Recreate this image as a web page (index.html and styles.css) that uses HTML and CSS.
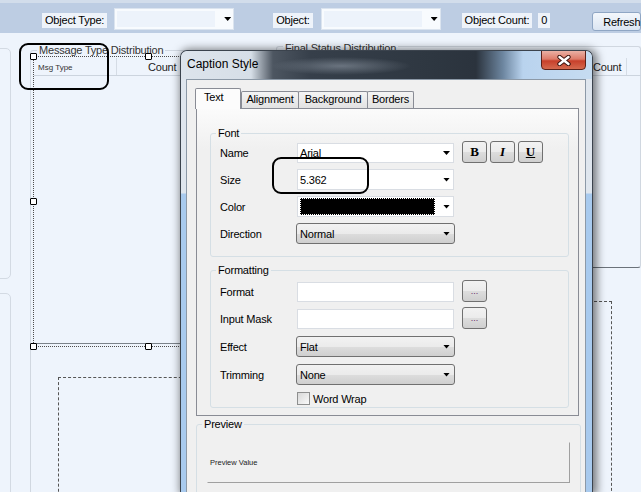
FILE: index.html
```html
<!DOCTYPE html>
<html>
<head>
<meta charset="utf-8">
<title>Caption Style</title>
<link rel="stylesheet" href="styles.css">
</head>
<body>
<div class="toolbar">
  <span class="tb-label">Object Type:</span>
  <div class="tb-combo gap7"><span class="tb-field"></span><span class="arrow"></span></div>
  <span class="tb-label gap39">Object:</span>
  <div class="tb-combo gap8"><span class="tb-field"></span><span class="arrow"></span></div>
  <span class="tb-label gap21">Object Count:</span>
  <span class="tb-label gap6">0</span>
  <button class="tb-refresh">Refresh</button>
</div>

<div class="canvas">
  <div class="side side-1"></div>
  <div class="side side-2"></div>
  <div class="rgroup rgroup-mt"><span class="rtitle">Message Type Distribution</span></div>
  <div class="rgroup rgroup-fs"><span class="rtitle rtitle-fs">Final Status Distribution</span></div>
  <div class="sel"></div>
  <div class="col-sep col-sep-l"></div>
  <div class="col-sep col-sep-r"></div>
  <div class="hdr-line hdr-line-l"></div>
  <div class="hdr-line hdr-line-r"></div>
  <div class="msg-type">Msg Type</div>
  <div class="count count-l">Count</div>
  <div class="count count-r">Count</div>
  <div class="rule"></div>
  <div class="dash dash-1"></div>
  <div class="dash dash-2"></div>
  <div class="handle h1"></div>
  <div class="handle h2"></div>
  <div class="handle h3"></div>
  <div class="handle h4"></div>
  <div class="handle h5"></div>
</div>

<div class="win">
  <div class="titlebar">
    <span class="title">Caption Style</span>
    <div class="close">
      <svg width="14" height="11" viewBox="0 0 14 11"><path d="M2.5 2 L11.5 9 M11.5 2 L2.5 9" stroke="#3c1510" stroke-width="4.4" stroke-linecap="round"/><path d="M2.5 2 L11.5 9 M11.5 2 L2.5 9" stroke="#ffffff" stroke-width="2.4" stroke-linecap="round"/></svg>
    </div>
  </div>
  <div class="client">
    <div class="tabs">
      <span class="tab on t1">Text</span>
      <span class="tab t2">Alignment</span>
      <span class="tab t3">Background</span>
      <span class="tab t4">Borders</span>
    </div>
    <div class="page">
      <fieldset class="group g-font">
        <legend>Font</legend>
        <div class="rows rows-font">
          <span class="lbl">Name</span>
          <div class="edit"><span>Arial</span><span class="arrow"></span></div>
          <div class="bgrp">
            <span class="btn fmt-b">B</span>
            <span class="btn fmt-i">I</span>
            <span class="btn fmt-u">U</span>
          </div>
          <span class="lbl">Size</span>
          <div class="edit"><span>5.362</span><span class="arrow"></span></div>
          <span></span>
          <span class="lbl">Color</span>
          <div class="edit"><span class="swatch"></span><span class="arrow"></span></div>
          <span></span>
          <span class="lbl">Direction</span>
          <div class="ddl"><span>Normal</span><span class="arrow"></span></div>
          <span></span>
        </div>
      </fieldset>
      <fieldset class="group g-fmt">
        <legend>Formatting</legend>
        <div class="rows rows-fmt">
          <span class="lbl">Format</span>
          <div class="edit"></div>
          <div class="bgrp"><span class="btn dots">...</span></div>
          <span class="lbl">Input Mask</span>
          <div class="edit"></div>
          <div class="bgrp"><span class="btn dots">...</span></div>
          <span class="lbl">Effect</span>
          <div class="ddl"><span>Flat</span><span class="arrow"></span></div>
          <span></span>
          <span class="lbl">Trimming</span>
          <div class="ddl"><span>None</span><span class="arrow"></span></div>
          <span></span>
          <span></span>
          <label class="chk-row"><span class="chk"></span><span>Word Wrap</span></label>
          <span></span>
        </div>
      </fieldset>
    </div>
    <fieldset class="group g-prev">
      <legend>Preview</legend>
      <div class="pv">Preview Value</div>
    </fieldset>
  </div>
</div>

<div class="mark mark-1"></div>
<div class="mark mark-2"></div>
</body>
</html>
```

FILE: styles.css
```css
* { box-sizing: border-box; }
html, body { margin: 0; padding: 0; }
body {
  width: 641px;
  height: 492px;
  overflow: hidden;
  position: relative;
  background: #eef4fc;
  font-family: "Liberation Sans", Arial, sans-serif;
  font-size: 11px;
  letter-spacing: -0.2px;
  color: #000;
}

/* ---------- top toolbar ---------- */
.toolbar {
  height: 33px;
  border-top: 3px solid #d2ddeb;
  background: #bdcde3;
  display: flex;
  align-items: flex-start;
  padding-left: 42px;
}
.tb-label {
  margin-top: 10px;
  height: 15px;
  line-height: 15px;
  padding: 0 3px;
  background: #eef3fa;
  white-space: nowrap;
}
.tb-combo {
  margin-top: 5px;
  width: 120px;
  height: 22px;
  border: 1px solid #dbe4ef;
  background: #f8fbfe;
  display: flex;
  align-items: center;
  padding: 0 2px;
}
.tb-field { width: 98px; height: 16px; background: #edf3fb; }
.tb-combo .arrow { margin-left: 9px; }
.gap7 { margin-left: 7px; }
.gap39 { margin-left: 39px; }
.gap8 { margin-left: 8px; }
.gap21 { margin-left: 21px; }
.gap6 { margin-left: 6px; }
.tb-refresh {
  margin: 9px 0 0 42px;
  height: 19px;
  width: 70px;
  padding: 0 0 0 10px;
  text-align: left;
  border: 1px solid #8fa6c4;
  border-radius: 3px;
  background: linear-gradient(#f3f7fc, #dbe5f2);
  font: inherit;
  letter-spacing: inherit;
  color: #000;
}
.arrow {
  display: block;
  flex: none;
  width: 7px;
  height: 4px;
  background: #000;
  clip-path: polygon(0 0, 100% 0, 50% 100%);
}

/* ---------- designer canvas ---------- */
.canvas { position: relative; height: 459px; overflow: hidden; }
.canvas > * { position: absolute; }
.side { left: -10px; width: 21px; border: 1px solid #d3dae3; border-radius: 5px; }
.side-1 { top: 15px; height: 231px; }
.side-2 { top: 260px; height: 220px; }
.rgroup { border: 1px solid #d0d7e0; border-radius: 3px; }
.rgroup-mt { left: 30px; top: 17px; width: 400px; height: 460px; }
.rgroup-fs { left: 276px; top: 13px; width: 365px; height: 222px; border-bottom-color: #6b727a; }
.rtitle {
  position: absolute;
  left: 6px;
  top: -7px;
  padding: 0 2px;
  background: #eef4fc;
  color: #333;
  line-height: 12px;
  white-space: nowrap;
}
.rtitle-fs { top: -5px; }
.sel { left: 33px; top: 23px; width: 240px; height: 291px; border: 1px dotted #4d4d4d; }
.hdr-line { height: 1px; top: 42px; background: #ccd4de; }
.hdr-line-l { left: 34px; width: 200px; }
.hdr-line-r { left: 593px; width: 48px; }
.col-sep { width: 1px; height: 17px; top: 25px; background: #d5dce5; }
.col-sep-l { left: 116px; }
.col-sep-r { left: 626px; }
.msg-type { left: 38px; top: 30px; font-size: 8px; line-height: 10px; letter-spacing: 0; color: #333; }
.count { top: 28px; line-height: 12px; color: #222; }
.count-l { left: 148px; }
.count-r { left: 593px; }
.rule { left: 33px; top: 310px; width: 200px; height: 1px; background: #7b828a; }
.dash-1 { left: 58px; top: 344px; width: 300px; height: 130px; border: 1px dashed #555; border-bottom: none; }
.dash-2 { left: 400px; top: 268px; width: 212px; height: 200px; border-top: 1px dashed #555; border-right: 1px dashed #555; }
.handle { width: 7px; height: 7px; border: 1px solid #000; background: #fff; border-radius: 1px; }
.h1 { left: 30px; top: 20px; }
.h2 { left: 145px; top: 20px; }
.h3 { left: 30px; top: 165px; }
.h4 { left: 30px; top: 310px; }
.h5 { left: 145px; top: 310px; }

/* ---------- dialog window ---------- */
.win {
  position: absolute;
  left: 180px;
  top: 50px;
  width: 413px;
  height: 442px;
  border: 1px solid #3b434d;
  border-bottom: none;
  border-radius: 7px 7px 0 0;
  background: linear-gradient(#dfe6ee 0, #dfe6ee 142px, #a8caee 143px);
  box-shadow: 2px 1px 9px 2px rgba(0, 0, 0, 0.5);
  display: flex;
  flex-direction: column;
  overflow: hidden;
  z-index: 5;
}
.titlebar {
  height: 28px;
  flex: none;
  display: flex;
  align-items: flex-start;
  border-radius: 6px 6px 0 0;
  background:
    radial-gradient(ellipse 70px 9px at 160px 15px, rgba(150, 160, 172, 0.55), rgba(150, 160, 172, 0)),
    linear-gradient(90deg, #dde4ec 0, #d6dee7 70px, #4d5661 92px, #363f4a 130px, #2e3741 250px, #2b333d 295px, #6d86a0 322px, #b9d3ee 342px, #c6dcf1 100%);
}
.title { margin: 6px 0 0 6px; font-size: 12px; line-height: 14px; letter-spacing: 0; }
.close {
  margin: -1px 6px 0 auto;
  width: 45px;
  height: 20px;
  border: 1px solid #5a2119;
  border-radius: 0 0 4px 4px;
  background: linear-gradient(#eab0a4 0, #dd7b69 45%, #c7402b 55%, #d46a4f 100%);
  display: flex;
  align-items: center;
  justify-content: center;
}
.client {
  flex: 1;
  min-height: 0;
  overflow: hidden;
  margin: 0 6px 0 5px;
  border: 1px solid #8c99a7;
  border-bottom: none;
  background: #f0f0f0;
  padding: 8px 0 0 8px;
}

/* tabs */
.tabs { display: flex; align-items: flex-end; height: 20px; }
.tab {
  height: 17px;
  line-height: 14px;
  border: 1px solid #898c95;
  border-bottom: none;
  border-radius: 2px 2px 0 0;
  background: linear-gradient(#f4f4f4, #e2e2e2);
  text-align: center;
  white-space: nowrap;
  margin-left: -1px;
}
.tab.on {
  height: 21px;
  margin-bottom: -1px;
  margin-left: 0;
  line-height: 16px;
  background: #fcfcfc;
  position: relative;
  z-index: 1;
  text-align: left;
  padding-left: 8px;
}
.t1 { width: 46px; }
.t2 { width: 58px; margin-left: 0; }
.t3 { width: 70px; }
.t4 { width: 47px; }
.page {
  margin-left: 1px;
  width: 383px;
  height: 308px;
  border: 1px solid #898c95;
  background: linear-gradient(#fbfbfb, #f0f0f0 40px);
  padding-left: 13px;
}

/* group boxes */
.group {
  margin: 0;
  padding: 4px 0 12px;
  border: 1px solid #d5dfe5;
  border-radius: 3px;
  min-width: 0;
}
.group legend { margin-left: 5px; padding: 0 2px; line-height: 12px; }
.g-font { margin-top: 18px; width: 359px; }
.g-fmt { margin-top: 7px; width: 359px; padding: 6px 0 2px; }
.g-prev { margin: 2px 0 0 1px; width: 385px; padding: 12px 0 20px; }

.rows {
  display: grid;
  grid-template-columns: 76px 159px auto;
  margin-left: 9px;
  align-items: center;
}
.rows-font { grid-template-rows: 20px 21px 21px 21px; row-gap: 6px; }
.rows-fmt { grid-template-rows: 20px 20px 21px 21px 13px; row-gap: 7px; }
.lbl { white-space: nowrap; }

.edit {
  margin-left: 1px;
  width: 157px;
  height: 100%;
  border: 1px solid #d9dde3;
  background: #fff;
  display: flex;
  align-items: center;
  justify-content: space-between;
  padding: 0 3px 0 2px;
}
.ddl {
  width: 159px;
  height: 100%;
  border: 1px solid #707070;
  border-radius: 3px;
  background: linear-gradient(#f2f2f2 0, #ebebeb 50%, #dddddd 51%, #cfcfcf 100%);
  display: flex;
  align-items: center;
  justify-content: space-between;
  padding: 0 4px 0 3px;
}
.swatch { width: 135px; height: 17px; background: #000; border: 1px dotted #fff; }
.bgrp { display: flex; gap: 3px; margin-left: 7px; align-self: start; margin-top: -2px; }
.btn {
  width: 25px;
  height: 22px;
  border: 1px solid #707070;
  border-radius: 3px;
  background: linear-gradient(#f2f2f2 0, #ebebeb 50%, #dddddd 51%, #cfcfcf 100%);
  display: flex;
  align-items: center;
  justify-content: center;
  font-family: "Liberation Serif", "Times New Roman", serif;
  font-weight: bold;
  font-size: 13px;
  letter-spacing: 0;
}
.fmt-i { font-style: italic; }
.fmt-u { text-decoration: underline; }
.dots {
  font-family: "Liberation Sans", Arial, sans-serif;
  font-weight: normal;
  font-size: 9px;
  color: #6b2d6b;
  align-items: flex-end;
  padding-bottom: 5px;
  line-height: 9px;
}
.chk-row { display: flex; align-items: center; margin-left: 1px; gap: 3px; }
.chk { width: 13px; height: 13px; border: 1px solid #8e8f8f; background: linear-gradient(135deg, #d8d8d8, #fafafa); }

.pv {
  margin-left: 10px;
  width: 363px;
  height: 41px;
  border: 1px solid;
  border-color: #f0f0f0 #a0a0a0 #a0a0a0 #f0f0f0;
  display: flex;
  align-items: center;
  padding-left: 2px;
  font-size: 7.5px;
  letter-spacing: 0;
  color: #222;
}

/* annotation marks */
.mark { position: absolute; border: 2px solid #000; border-radius: 9px; z-index: 10; }
.mark-1 { left: 19px; top: 43px; width: 90px; height: 47px; }
.mark-2 { left: 272px; top: 157px; width: 97px; height: 37px; }
```
